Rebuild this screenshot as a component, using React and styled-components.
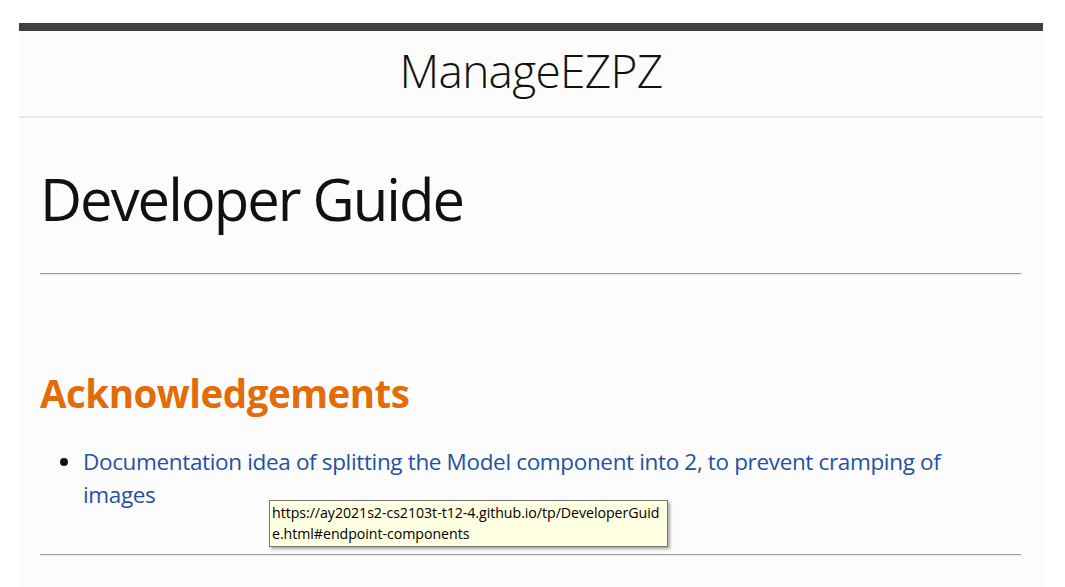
import styled, { createGlobalStyle } from 'styled-components';

const GlobalStyle = createGlobalStyle`
  html, body {
    margin: 0;
    padding: 0;
    background: #ffffff;
  }
  body {
    font-family: 'Open Sans', 'Noto Sans', sans-serif;
  }
`;

const Page = styled.div`
  padding: 23px 22px 0 19px;
  height: 587px;
  box-sizing: border-box;
  overflow: hidden;
`;

const Panel = styled.div`
  background: #fcfcfc;
  border-top: 8px solid #3f3f3f;
  min-height: 600px;
`;

const SiteHeader = styled.header`
  height: 87px;
  box-sizing: border-box;
  padding-top: 16px;
  border-bottom: 2px solid #e8e8e8;
  display: flex;
  justify-content: center;
`;

const SiteTitle = styled.span`
  font-size: 46px;
  line-height: 1;
  font-weight: 300;
  color: #111;
  letter-spacing: -0.7px;
`;

const Content = styled.main`
  padding: 0 22px 0 21px;
`;

const Title = styled.h1`
  margin: 0;
  padding-top: 40px;
  font-size: 58px;
  font-weight: 400;
  line-height: 82px;
  color: #111;
  letter-spacing: -2px;
`;

const Rule = styled.hr`
  margin: ${(p) => p.$top}px 0 0;
  border: none;
  border-top: 1px solid #9a9a9a;
  border-bottom: 1px solid #ececec;
  height: 0;
`;

const SectionTitle = styled.h2`
  margin: 93px 0 0 0;
  font-size: 38.5px;
  font-weight: 700;
  line-height: 50px;
  color: #e36c0a;
  letter-spacing: -0.5px;
`;

const List = styled.ul`
  margin: 27px 0 0;
  padding: 0 60px 0 43px;
  font-size: 22.5px;
  line-height: 33px;
  color: #1f52a3;
  letter-spacing: -0.35px;
  position: relative;
  li::marker {
    color: #111;
  }
`;

const Item = styled.li`
  padding-left: 0;
`;

const Link = styled.a`
  color: inherit;
  text-decoration: none;
`;

const Tooltip = styled.div`
  position: absolute;
  left: 229px;
  top: 55px;
  width: 390px;
  padding: 1px 5px 2px 2px;
  background: #ffffe1;
  border: 1px solid #767676;
  box-shadow: 2px 2px 3px rgba(0, 0, 0, 0.35);
  font-family: 'Open Sans', 'Noto Sans', sans-serif;
  font-size: 14.2px;
  line-height: 21px;
  letter-spacing: -0.05px;
  color: #000;
`;

const TipLine = styled.span`
  display: block;
  white-space: nowrap;
`;

export default function App() {
  return (
    <>
      <GlobalStyle />
      <Page>
        <Panel>
          <SiteHeader>
            <SiteTitle>ManageEZPZ</SiteTitle>
          </SiteHeader>
          <Content>
            <Title>Developer Guide</Title>
            <Rule $top={33} />
            <SectionTitle>Acknowledgements</SectionTitle>
            <List>
              <Item>
                <Link href="#endpoint-components">
                  Documentation idea of splitting the Model component into 2, to prevent cramping of images
                </Link>
              </Item>
              <Tooltip>
                <TipLine>https://ay2021s2-cs2103t-t12-4.github.io/tp/DeveloperGuid</TipLine>
                <TipLine>e.html#endpoint-components</TipLine>
              </Tooltip>
            </List>
            <Rule $top={43} />
          </Content>
        </Panel>
      </Page>
    </>
  );
}
